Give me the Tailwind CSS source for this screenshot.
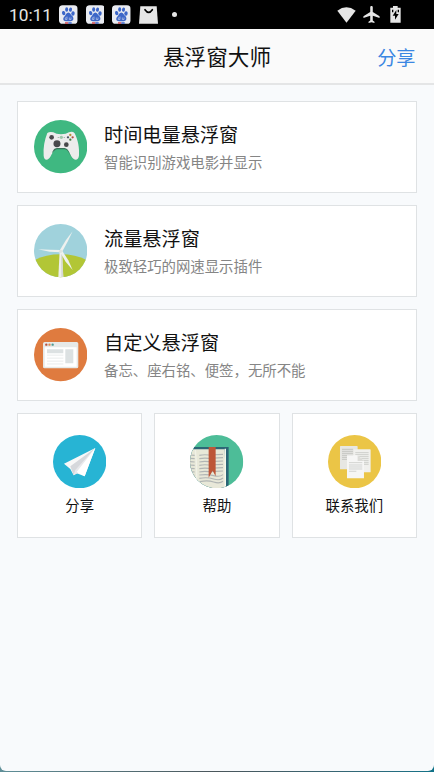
<!DOCTYPE html>
<html lang="zh-CN">
<head>
<meta charset="utf-8">
<title>悬浮窗大师</title>
<script src="https://cdn.jsdelivr.net/npm/@tailwindcss/browser@4"></script>
</head>
<body class="bg-linear-to-r from-[#5f8f98] via-[#4a565b] to-[#0f7288] font-['Noto_Sans_CJK_SC',sans-serif] text-[#111]">
<svg class="hidden">
  <symbol id="paw" viewBox="0 0 56 56">
    <rect x="0" y="0" width="56" height="56" rx="11" fill="#e9ebf1"/>
    <g fill="#3c66c8">
      <ellipse cx="14" cy="24" rx="5" ry="6.5" transform="rotate(-15 14 24)"/>
      <ellipse cx="23" cy="13" rx="4.5" ry="6.5"/>
      <ellipse cx="34.500" cy="13.500" rx="4.500" ry="6.500" transform="rotate(12 34.500 13.500)"/>
      <ellipse cx="42" cy="25" rx="5" ry="6.500" transform="rotate(8 42 25)"/>
      <path d="M28 22C34 22 35 29 39 32C46 38 44 48 35 48H21C12 48 10 39 17 33C21 29 22 22 28 22Z"/>
    </g>
    <path d="M24 34V43H19V38H23M31 37V43H36V37" fill="none" stroke="#e9ebf1" stroke-width="1.500"/>
    <path d="M18 51H28V56H18Z" fill="#d34a50"/><path d="M28 51H38V56H28Z" fill="#3c66c8"/>
  </symbol>
</svg>
<div class="flex h-[771px] w-[434px] flex-col overflow-hidden rounded-b-[6px] bg-[#f8fafc]">
  <div class="flex h-[29px] shrink-0 items-center bg-black pl-[9px] pr-[33px]">
    <span class="w-[50px] whitespace-nowrap pt-px font-[Roboto] text-[17.300px] leading-[29px] text-[#e6e6e6]">10:11</span>
    <div class="flex items-center gap-[8px]">
      <svg class="h-[19px] w-[18.700px]"><use href="#paw"/></svg>
      <svg class="h-[19px] w-[18.700px]"><use href="#paw"/></svg>
      <svg class="h-[19px] w-[18.700px]"><use href="#paw"/></svg>
      <svg class="h-[18px] w-[19px]" viewBox="0 0 57 54"><path d="M4 1H53L57 53H0Z" fill="#e6e6e6"/><path d="M18 11Q29 27 40 11" fill="none" stroke="#000" stroke-width="5" stroke-linecap="round"/></svg>
    </div>
    <span class="ml-[14px] size-[5px] rounded-full bg-[#e6e6e6]"></span>
    <div class="ml-auto flex items-center">
      <svg class="h-[16px] w-[19px]" viewBox="0 0 57 48"><path d="M1 11Q28 -9 56 11L28.500 47Z" fill="#e6e6e6"/></svg>
      <svg class="ml-[7px] h-[17px] w-[17px]" viewBox="2 2 19 20"><path d="M21 16v-2l-8-5V3.500C13 2.670 12.330 2 11.500 2S10 2.670 10 3.500V9l-8 5v2l8-2.500V19l-2 1.500V22l3.500-1 3.500 1v-1.500L13 19v-5.500L21 16z" fill="#e6e6e6"/></svg>
      <svg class="ml-[10px] h-[17px] w-[11px]" viewBox="0 0 33 51"><path d="M9 5V0H23V5H32V50H1V5Z" fill="#e6e6e6"/><path d="M19 12L8 29H15V41L26 24H19ZM6 11H10V19H6ZM23 11H27V19H23Z" fill="#000"/></svg>
    </div>
  </div>

  <header class="relative flex h-[56px] shrink-0 items-center justify-center border-b-2 border-[#e4e5e6] bg-[#fafafa]">
    <h1 class="text-[21.600px] leading-[54px]">悬浮窗大师</h1>
    <span class="absolute right-[18.500px] top-0 text-[19.200px] leading-[56px] text-[#3b87e2]">分享</span>
  </header>

  <main class="flex flex-col gap-[12px] px-[17px] pt-[16px]">
    <section class="flex h-[92px] items-center border border-[#dfe2e4] bg-white pl-[15.700px]">
      <svg class="size-[53.300px] shrink-0" viewBox="71 77 160 160">
        <circle cx="151" cy="157" r="80" fill="#3fb881"/>
        <path d="M111 116Q118 111 129 114Q137 120 152 120Q168 120 176 114Q187 110 193 117C203 136 208 162 206 184C204 200 191 200 183 186C176 173 174 163 163 163H142C130 163 128 173 121 186C113 201 101 199 100 184C98 160 103 136 111 116Z" fill="#ececec"/>
        <path d="M125 176C130 163 134 161 143 161H163C174 163 176 174 183 188C176 178 173 165 162 165H143C133 165 130 173 125 176Z" fill="#397359"/>
        <g fill="#49494b"><circle cx="124" cy="129" r="7"/><circle cx="140" cy="148" r="10.500"/><circle cx="168" cy="151" r="7"/></g>
        <circle cx="153" cy="129" r="5" fill="#9cc7aa"/><path d="M142 128H146V131H142ZM160 128H164V131H160Z" fill="#a9b8ae"/>
        <circle cx="180" cy="122" r="3.500" fill="#b19334"/><circle cx="173" cy="129" r="3.500" fill="#495461"/><circle cx="187" cy="129" r="3.500" fill="#b44f40"/><circle cx="180" cy="136" r="3.500" fill="#487a45"/>
      </svg>
      <div class="ml-[17px] pt-[2px]"><h2 class="text-[19.200px] leading-[28px]">时间电量悬浮窗</h2><p class="text-[14.400px] leading-[28px] text-[#858585]">智能识别游戏电影并显示</p></div>
    </section>

    <section class="flex h-[92px] items-center border border-[#dfe2e4] bg-white pl-[15.700px]">
      <svg class="size-[53.300px] shrink-0" viewBox="71 72 160 160">
        <clipPath id="wind"><circle cx="151" cy="152" r="80"/></clipPath>
        <g clip-path="url(#wind)">
          <path d="M71 72H231V232H71Z" fill="#a0d2dc"/>
          <ellipse cx="151" cy="222" rx="110" ry="59" fill="#b2c636"/>
          <path d="M148 154H155L159 232H144Z" fill="#eeefed"/><path d="M152 154H155L159 232H153Z" fill="#d6d9d4"/>
          <path d="M147 153L167 120L187 94L173 123L155 156Z" fill="#eef1ef"/>
          <path d="M151 157L118 155L83 148L119 149L151 150Z" fill="#eef1ef"/>
          <path d="M149 156L156 153L174 181L187 210L166 185Z" fill="#eef1ef"/>
          <circle cx="151" cy="154" r="5" fill="#dfe4e2"/>
        </g>
      </svg>
      <div class="ml-[17px] pt-[2px]"><h2 class="text-[19.200px] leading-[28px]">流量悬浮窗</h2><p class="text-[14.400px] leading-[28px] text-[#858585]">极致轻巧的网速显示插件</p></div>
    </section>

    <section class="flex h-[92px] items-center border border-[#dfe2e4] bg-white pl-[15.700px]">
      <svg class="size-[53.300px] shrink-0" viewBox="71 68 160 160">
        <circle cx="151" cy="148" r="80" fill="#df7b3f"/>
        <rect x="98" y="110" width="106" height="79" rx="5" fill="#e6e9e8"/>
        <path d="M103 126H199V184H103Z" fill="#fff"/>
        <circle cx="108" cy="118" r="3.500" fill="#b8503c"/><circle cx="117.500" cy="118" r="3.500" fill="#d98a52"/><circle cx="127" cy="118" r="3.500" fill="#4f9a91"/>
        <path d="M110 132H159V144H110ZM165 132H189V174H165Z" fill="#dce1e2"/>
        <path d="M110 149.500H159M110 158.500H159M110 167.500H159M110 176H159" stroke="#dce1e2" stroke-width="2"/>
      </svg>
      <div class="ml-[17px] pt-px"><h2 class="text-[19.200px] leading-[28px]">自定义悬浮窗</h2><p class="text-[14.400px] leading-[28px] text-[#858585]">备忘、座右铭、便签，无所不能</p></div>
    </section>

    <div class="-mt-[0.500px] grid grid-cols-3 gap-[12px]">
      <section class="flex h-[125.300px] flex-col items-center border border-[#dfe2e4] bg-white pt-[21px]">
        <svg class="size-[53.300px]" viewBox="129 89 160 160">
          <circle cx="209" cy="169" r="80" fill="#27b4d4"/>
          <path d="M256 128L162 175L181 191L191 210L200 204L224 213Z" fill="#f8f8f8"/>
          <path d="M256 128L181 183L191 210L197 196Z" fill="#d6d8dc"/>
          <path d="M256 128L196 194L191 210L203 204Z" fill="#e8e9ec"/>
          <path d="M256 128L200 200L224 213Z" fill="#fff"/>
        </svg>
        <span class="mt-[5px] text-[14.400px] leading-[24px]">分享</span>
      </section>
      <section class="flex h-[125.300px] flex-col items-center border border-[#dfe2e4] bg-white pt-[21px]">
        <svg class="size-[53.300px]" viewBox="127 89 160 160">
          <clipPath id="book"><circle cx="207" cy="169" r="80"/></clipPath>
          <g clip-path="url(#book)">
            <path d="M127 89H287V249H127Z" fill="#4dbd98"/>
            <path d="M127 125H243V249H127Z" fill="#2c6676"/>
            <path d="M127 132H231L235 249H127Z" fill="#e8e8d8"/>
            <path d="M231 130H235V242H231Z" fill="#fbfbef"/>
            <path d="M143 134Q149 185 146 249" fill="none" stroke="#f1f1e7" stroke-width="4"/>
            <path d="M155 150Q169 147 183 149L226 147M155 160Q169 157 183 159L226 157M155 170Q169 167 183 169L226 167M155 180Q169 177 183 179L226 177M155 190Q169 187 183 189L226 187M155 200Q169 197 183 199L226 197M155 209Q180 206 198 211T226 208M155 219Q180 215 198 221T226 218M157 229Q180 224 198 230T226 228M127 149L141 150M127 159L141 160M127 169L141 170M127 179L141 180M127 189L141 190M127 199L141 200M127 209L141 210" fill="none" stroke="#b1b5b4" stroke-width="3.500"/>
            <path d="M183 125H204V213L195 196L183 217Z" fill="#bd5638"/>
          </g>
        </svg>
        <span class="mt-[5px] text-[14.400px] leading-[24px]">帮助</span>
      </section>
      <section class="flex h-[125.300px] flex-col items-center border border-[#dfe2e4] bg-white pt-[21px]">
        <svg class="size-[53.300px]" viewBox="126 89 160 160">
          <circle cx="206" cy="169" r="80" fill="#ebc546"/>
          <rect x="162" y="122" width="53" height="70" rx="2" fill="#e7e7e3"/>
          <path d="M168 132H201M168 138H201M168 144H201M168 150H201M168 156H190M168 162H184" stroke="#bebfba" stroke-width="2.500"/>
          <rect x="203" y="132" width="51" height="69" rx="2" fill="#f0f0ed"/>
          <path d="M208 142H248M208 148H248M216 154H248M216 160H248M216 166H248M234 172H248M234 177H248" stroke="#c8c9c5" stroke-width="2.500"/>
          <path d="M183 150H215L234 167V219H183Z" fill="#f6f6f5"/><path d="M215 150V167H234Z" fill="#dcdcd8"/>
          <path d="M189 172H229M189 179H229M189 185H229M189 191H229M189 198H211" stroke="#cbccca" stroke-width="2.500"/>
        </svg>
        <span class="mt-[5px] text-[14.400px] leading-[24px]">联系我们</span>
      </section>
    </div>
  </main>
</div>
</body>
</html>
